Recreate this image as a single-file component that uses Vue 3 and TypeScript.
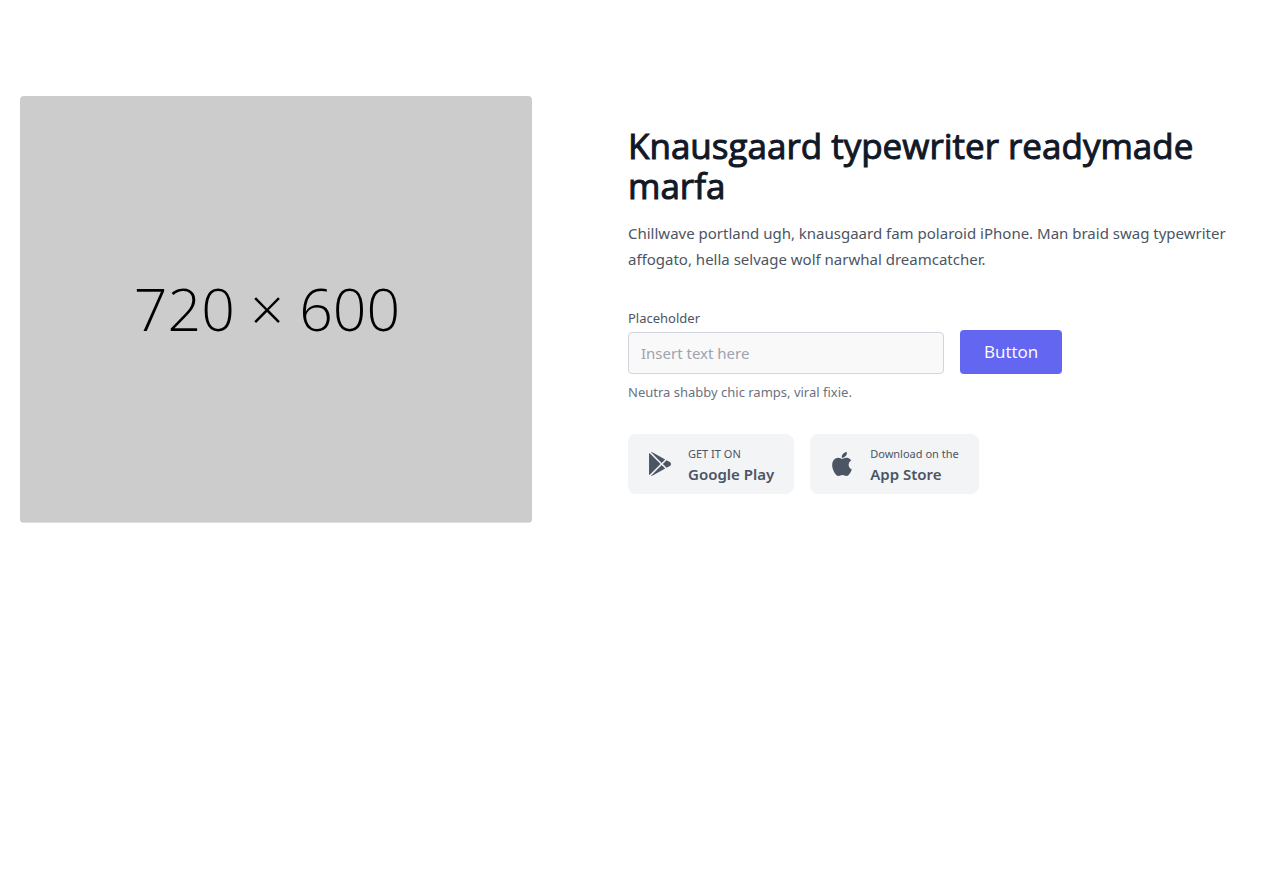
<script setup lang="ts">
import { ref } from 'vue'

interface Store {
  name: string
  caption: string
  viewBox: string
  paths: string[]
}

const message = ref<string>('')

const stores: Store[] = [
  {
    name: 'Google Play',
    caption: 'GET IT ON',
    viewBox: '0 0 512 512',
    paths: [
      'M99.617 8.057a50.191 50.191 0 00-38.815-6.713l230.932 230.933 74.846-74.846L99.617 8.057zM32.139 20.116c-6.441 8.563-10.148 19.077-10.148 30.199v411.358c0 11.123 3.708 21.636 10.148 30.199l235.877-235.877L32.139 20.116zM464.261 212.087l-67.266-37.637-81.544 81.544 81.548 81.548 67.273-37.64c16.117-9.03 25.738-25.442 25.738-43.908s-9.621-34.877-25.749-43.907zM291.733 279.711L60.815 510.629c3.786.891 7.639 1.371 11.492 1.371a50.275 50.275 0 0027.31-8.07l266.965-149.372-74.849-74.847z',
    ],
  },
  {
    name: 'App Store',
    caption: 'Download on the',
    viewBox: '0 0 305 305',
    paths: [
      'M40.738 112.119c-25.785 44.745-9.393 112.648 19.121 153.82C74.092 286.523 88.502 305 108.239 305c.372 0 .745-.007 1.127-.022 9.273-.37 15.974-3.225 22.453-5.984 7.274-3.1 14.797-6.305 26.597-6.305 11.226 0 18.39 3.101 25.318 6.099 6.828 2.954 13.861 6.01 24.253 5.815 22.232-.414 35.882-20.352 47.925-37.941a168.18 168.18 0 0021-43l.071-.28a2.5 2.5 0 00-1.33-3.066l-.182-.078c-3.915-1.6-38.257-16.836-38.618-58.36-.335-33.736 25.763-51.601 30.997-54.839l.244-.152a2.5 2.5 0 00.63-3.61c-18.014-26.362-45.624-30.335-56.74-30.813a50.04 50.04 0 00-4.95-.242c-13.056 0-25.563 4.931-35.611 8.893-6.936 2.735-12.927 5.097-17.059 5.097-4.643 0-10.668-2.391-17.645-5.159-9.33-3.703-19.905-7.899-31.1-7.899l-.789.006C81.24 73.48 55.938 87.7 40.738 112.119z',
      'M212.101.002c-15.763.642-34.672 10.345-45.974 23.583-9.605 11.127-18.988 29.679-16.516 48.379a2.5 2.5 0 002.29 2.164c1.064.083 2.15.125 3.231.126 15.413 0 32.04-8.527 43.395-22.257 11.951-14.498 17.994-33.104 16.166-49.77A2.511 2.511 0 00212.101.002z',
    ],
  },
]
</script>

<template>
  <section class="hero">
    <svg class="hero-image" viewBox="0 0 720 600" role="img" aria-label="hero">
      <rect width="720" height="600" fill="#cccccc" />
      <text x="160" y="330">720 × 600</text>
    </svg>
    <div class="content">
      <h1>Knausgaard typewriter readymade marfa</h1>
      <p class="lead">
        Chillwave portland ugh, knausgaard fam polaroid iPhone. Man braid swag typewriter affogato,
        hella selvage wolf narwhal dreamcatcher.
      </p>
      <form class="form-row" @submit.prevent>
        <div class="field">
          <label for="hero-field">Placeholder</label>
          <input id="hero-field" v-model="message" type="text" name="hero-field" placeholder="Insert text here" />
        </div>
        <button class="submit" type="submit">Button</button>
      </form>
      <p class="hint">Neutra shabby chic ramps, viral fixie.</p>
      <div class="stores">
        <button v-for="store in stores" :key="store.name" class="store" type="button">
          <svg class="store-icon" :viewBox="store.viewBox" aria-hidden="true">
            <path v-for="d in store.paths" :key="d" :d="d" />
          </svg>
          <span class="store-text">
            <span class="store-caption">{{ store.caption }}</span>
            <span class="store-name">{{ store.name }}</span>
          </span>
        </button>
      </div>
    </div>
  </section>
</template>

<style>
body {
  margin: 0;
  background: #ffffff;
}
</style>

<style scoped>
* {
  box-sizing: border-box;
}

.hero {
  display: flex;
  align-items: center;
  gap: 96px;
  max-width: 1280px;
  margin: 0 auto;
  padding: 96px 20px;
  color: #4b5563;
  font-family: "Noto Sans", "Open Sans", sans-serif;
  font-size: 15px;
  line-height: 24px;
}

.hero-image {
  display: block;
  flex: 0 1 512px;
  min-width: 0;
  border-radius: 4px;
}

.hero-image text {
  fill: #000000;
  font-family: "Open Sans", sans-serif;
  font-size: 83px;
  font-weight: 300;
}

.content {
  flex: 1;
  min-width: 0;
  padding-top: 2px;
}

h1 {
  margin: 0 0 14px;
  color: #111827;
  font-family: "Open Sans", sans-serif;
  font-size: 35px;
  font-weight: 500;
  line-height: 40px;
  -webkit-text-stroke: 1px #111827;
}

.lead {
  margin: 0 0 32px;
  line-height: 26px;
}

.form-row {
  display: flex;
  align-items: flex-end;
  gap: 16px;
}

.field {
  flex: 0 1 316px;
  min-width: 0;
}

label {
  display: block;
  font-size: 13px;
  line-height: 28px;
}

input {
  display: block;
  width: 100%;
  height: 42px;
  padding: 4px 12px;
  border: 1px solid #d1d5db;
  border-radius: 4px;
  background: #f9f9f9;
  color: #374151;
  font: inherit;
}

input::placeholder {
  color: #9ca3af;
  opacity: 1;
}

input:focus {
  border-color: #6366f1;
  outline: none;
}

button {
  border: 0;
  font: inherit;
  cursor: pointer;
}

.submit {
  padding: 8px 24px;
  border-radius: 4px;
  background: #6366f1;
  color: #ffffff;
  font-family: "Open Sans", sans-serif;
  font-size: 17px;
  line-height: 28px;
}

.hint {
  margin: 8px 0 32px;
  color: #6b7280;
  font-size: 13px;
  line-height: 20px;
}

.stores {
  display: flex;
  flex-wrap: wrap;
  gap: 16px;
}

.store {
  display: flex;
  align-items: center;
  gap: 16px;
  padding: 8px 20px;
  border-radius: 8px;
  background: #f3f4f6;
  color: #4b5563;
}

.store-icon {
  width: 24px;
  height: 24px;
  fill: currentColor;
}

.store-text {
  display: flex;
  flex-direction: column;
  align-items: flex-start;
  padding-top: 4px;
}

.store-caption {
  font-size: 11px;
  line-height: 16px;
}

.store-name {
  font-weight: 600;
}
</style>
